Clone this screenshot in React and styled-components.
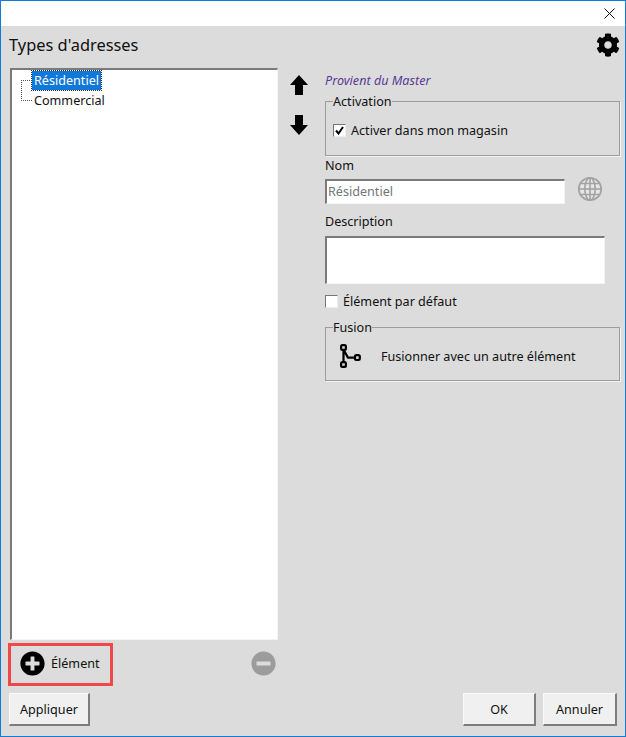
import styled, { createGlobalStyle } from "styled-components";
import { FaCog, FaPlusCircle, FaMinusCircle } from "react-icons/fa";

const GlobalStyle = createGlobalStyle`
  html, body {
    margin: 0;
    padding: 0;
    background: #dcdcdc;
  }
  * {
    box-sizing: border-box;
  }
`;

function ArrowIcon({ down }) {
  return (
    <svg width="18" height="20" viewBox="0 0 18 20">
      <polygon
        fill="#000"
        points={
          down
            ? "5,0 13,0 13,10 18,10 9,20 0,10 5,10"
            : "9,0 18,10 13,10 13,20 5,20 5,10 0,10"
        }
      />
    </svg>
  );
}

function GlobeIcon() {
  return (
    <GlobeSvg viewBox="0 0 26 26" fill="none" stroke="#a3a3a3" strokeWidth="1.6">
      <circle cx="13" cy="13" r="11.2" fill="#e6e6e6" strokeWidth="1.8" />
      <ellipse cx="13" cy="13" rx="5.2" ry="11.2" />
      <line x1="13" y1="2" x2="13" y2="24" />
      <line x1="2" y1="13" x2="24" y2="13" />
      <path d="M4 7.5h18M4 18.5h18" />
    </GlobeSvg>
  );
}

function MergeIcon() {
  return (
    <svg width="21" height="24" viewBox="0 0 21 24" fill="none" stroke="#000" strokeWidth="2.2">
      <rect x="1.1" y="1.1" width="4.8" height="4.8" rx="1.4" />
      <rect x="1.1" y="18.1" width="4.8" height="4.8" rx="1.4" />
      <rect x="15" y="11.2" width="4.8" height="4.8" rx="1.4" />
      <path d="M3.5 6v12M4 6.5L8 13.6H15" />
    </svg>
  );
}

function App() {
  return (
    <>
      <GlobalStyle />
      <Window>
        <TitleBar>
          <CloseIcon viewBox="0 0 11 11">
            <path d="M0.5 0.5L10.5 10.5M10.5 0.5L0.5 10.5" />
          </CloseIcon>
        </TitleBar>
        <Header>
          <Title>Types d'adresses</Title>
          <FaCog size={24} color="#000" />
        </Header>
        <Main>
          <LeftColumn>
            <Tree>
              <TreeRow $first>
                <TreeLabel $selected>Résidentiel</TreeLabel>
              </TreeRow>
              <TreeRow $last>
                <TreeLabel>Commercial</TreeLabel>
              </TreeRow>
            </Tree>
            <TreeActions>
              <AddButton>
                <FaPlusCircle size={25} color="#000" />
                Élément
              </AddButton>
              <RemoveIcon size={25} color="#9c9c9c" />
            </TreeActions>
          </LeftColumn>
          <ArrowColumn>
            <ArrowIcon />
            <ArrowIcon down />
          </ArrowColumn>
          <Details>
            <MasterNote>Provient du Master</MasterNote>
            <GroupBox $height={62}>
              <GroupLegend>Activation</GroupLegend>
              <CheckRow>
                <CheckBox>
                  <svg width="9" height="9" viewBox="0 0 9 9" fill="none" stroke="#000" strokeWidth="2">
                    <path d="M1 4.5L3.5 7.5L8 1" />
                  </svg>
                </CheckBox>
                Activer dans mon magasin
              </CheckRow>
            </GroupBox>
            <FieldLabel $top={0}>Nom</FieldLabel>
            <NameRow>
              <TextField $width={240} $height={25}>Résidentiel</TextField>
              <GlobeIcon />
            </NameRow>
            <FieldLabel $top={8}>Description</FieldLabel>
            <DescriptionField $width={280} $height={48} />
            <DefaultRow>
              <CheckBox />
              Élément par défaut
            </DefaultRow>
            <GroupBox $height={61}>
              <GroupLegend>Fusion</GroupLegend>
              <MergeRow>
                <MergeIcon />
                Fusionner avec un autre élément
              </MergeRow>
            </GroupBox>
          </Details>
        </Main>
        <Footer>
          <PushButton $width={81}>Appliquer</PushButton>
          <FooterRight>
            <PushButton $width={73}>OK</PushButton>
            <PushButton $width={74}>Annuler</PushButton>
          </FooterRight>
        </Footer>
      </Window>
    </>
  );
}

const Window = styled.div`
  width: 626px;
  height: 737px;
  display: flex;
  flex-direction: column;
  background: #dcdcdc;
  border: 1px solid #0f7dd6;
  font-family: "Noto Sans", "Open Sans", sans-serif;
  font-size: 12.6px;
  color: #111;
`;
const TitleBar = styled.div`
  height: 25px;
  flex: none;
  background: #fff;
  display: flex;
  align-items: center;
  justify-content: flex-end;
  padding-right: 10px;
`;
const CloseIcon = styled.svg`
  width: 11px;
  height: 11px;
  fill: none;
  stroke: #111;
  stroke-width: 1;
`;
const Header = styled.div`
  height: 42px;
  flex: none;
  display: flex;
  align-items: center;
  justify-content: space-between;
  padding: 0 5px 5px 8px;
`;
const Title = styled.div`
  font-size: 16.4px;
`;
const Main = styled.div`
  flex: 1;
  display: flex;
  padding-left: 9px;
  min-height: 0;
`;
const LeftColumn = styled.div`
  width: 268px;
  flex: none;
  display: flex;
  flex-direction: column;
`;
const Tree = styled.div`
  height: 572px;
  flex: none;
  background: #fff;
  border-style: solid;
  border-width: 2px 1px 1px 2px;
  border-color: #7a7a7a #f4f4f4 #f4f4f4 #7a7a7a;
  padding: 0 0 0 9px;
`;
const TreeRow = styled.div`
  position: relative;
  height: 20px;
  display: flex;
  align-items: center;
  padding-left: 11px;
  &::before {
    content: "";
    position: absolute;
    left: 0;
    top: ${(p) => (p.$first ? "10px" : "0")};
    height: 10px;
    width: 10px;
    border-left: 1px dotted #555;
    border-top: ${(p) => (p.$first ? "1px dotted #555" : "none")};
    border-bottom: ${(p) => (p.$last ? "1px dotted #555" : "none")};
  }
`;
const TreeLabel = styled.span`
  padding: 0 2px;
  line-height: 19px;
  height: 19px;
  color: ${(p) => (p.$selected ? "#fff" : "#111")};
  background: ${(p) => (p.$selected ? "#0f78d8" : "transparent")};
  outline: ${(p) => (p.$selected ? "1px dotted #333" : "none")};
`;
const TreeActions = styled.div`
  display: flex;
  align-items: center;
  justify-content: space-between;
  padding-right: 2px;
  margin-top: 3px;
`;
const AddButton = styled.div`
  width: 105px;
  height: 43px;
  display: flex;
  align-items: center;
  gap: 6px;
  padding: 0 0 2px 9px;
  border: 3px solid #f04848;
  margin-left: -2px;
`;
const RemoveIcon = styled(FaMinusCircle)`
  margin-bottom: 2px;
`;
const ArrowColumn = styled.div`
  width: 47px;
  flex: none;
  display: flex;
  flex-direction: column;
  gap: 20px;
  padding: 7px 0 0 12px;
`;
const Details = styled.div`
  width: 295px;
  flex: none;
  display: flex;
  flex-direction: column;
`;
const MasterNote = styled.div`
  height: 26px;
  line-height: 25px;
  font-size: 12.6px;
  font-style: italic;
  color: #5b3a97;
`;
const GroupBox = styled.fieldset`
  margin: 0;
  padding: 0 7px;
  height: ${(p) => p.$height}px;
  border: 1px solid #9d9d9d;
  box-shadow: 1px 1px 0 #f2f2f2;
  min-width: 0;
`;
const GroupLegend = styled.legend`
  padding: 0;
  font-size: 12.6px;
  line-height: 15px;
`;
const CheckRow = styled.div`
  display: flex;
  align-items: center;
  gap: 5px;
  height: 20px;
  margin-top: 11px;
`;
const CheckBox = styled.span`
  width: 13px;
  height: 13px;
  flex: none;
  display: flex;
  align-items: center;
  justify-content: center;
  background: #fff;
  border-style: solid;
  border-width: 1px;
  border-color: #777 #eee #eee #777;
`;
const FieldLabel = styled.div`
  margin-top: ${(p) => p.$top}px;
  height: 18px;
  line-height: 20px;
`;
const NameRow = styled.div`
  display: flex;
  align-items: flex-start;
  gap: 12px;
  height: 25px;
  margin-top: 5px;
`;
const GlobeSvg = styled.svg`
  width: 26px;
  height: 26px;
  margin-top: -3px;
`;
const TextField = styled.div`
  width: ${(p) => p.$width}px;
  height: ${(p) => p.$height}px;
  line-height: 22px;
  padding-left: 1px;
  background: #fff;
  color: #6f767c;
  border-style: solid;
  border-width: 2px 1px 1px 2px;
  border-color: #7a7a7a #f4f4f4 #f4f4f4 #7a7a7a;
`;
const DescriptionField = styled(TextField)`
  margin-top: 6px;
`;
const DefaultRow = styled.div`
  display: flex;
  align-items: center;
  gap: 5px;
  height: 20px;
  margin: 7px 0 9px;
`;
const MergeRow = styled.div`
  display: flex;
  align-items: center;
  gap: 20px;
  height: 30px;
  padding-left: 7px;
  margin-top: 6px;
`;
const Footer = styled.div`
  height: 43px;
  flex: none;
  display: flex;
  justify-content: space-between;
  padding: 0 8px;
`;
const FooterRight = styled.div`
  display: flex;
  gap: 7px;
`;
const PushButton = styled.div`
  width: ${(p) => p.$width}px;
  height: 33px;
  display: flex;
  align-items: center;
  justify-content: center;
  background: #f0f0f0;
  border-style: solid;
  border-width: 1px 2px 2px 1px;
  border-color: #fafafa #7d7d7d #7d7d7d #fafafa;
`;

export default App;
